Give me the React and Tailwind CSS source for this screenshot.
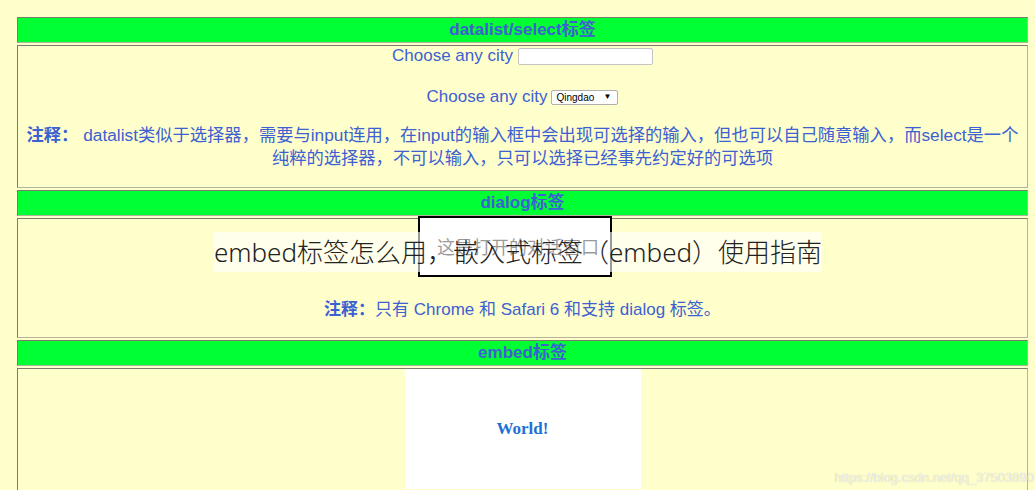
import React from 'react';

const cellBorder = 'border border-t-[#7c7c6c] border-l-[#7c7c6c] border-b-[#b4b49c] border-r-[#b4b49c]';

function HeaderCell({ children }) {
    return (
        <div className={`${cellBorder} h-[26px] bg-[#00ff33] flex items-center justify-center font-bold`}>
            {children}
        </div>
    );
}

export default function App() {
    return (
        <div className="relative h-[490px] overflow-hidden bg-[#ffffcc] text-[17px] text-[#3d60d2] font-['Liberation_Sans','Noto_Sans_CJK_SC',sans-serif]">
            {/* table */}
            <div className="pt-[17px] pl-[17px] pr-[7px] flex flex-col gap-[2px]">
                <HeaderCell>datalist/select标签</HeaderCell>
                <div className={`${cellBorder} h-[143px]`}>
                    <div className="h-[20px] flex items-center justify-center whitespace-nowrap">
                        <span>Choose any city</span>
                        <span className="ml-[5px] w-[135px] h-[17px] border border-[#c4c4c4] bg-white rounded-[2px]" />
                    </div>
                    <div className="mt-[21px] h-[20px] flex items-center justify-center whitespace-nowrap">
                        <span>Choose any city</span>
                        <span className="ml-[4px] w-[67px] h-[15px] border border-[#b0b0b0] bg-white rounded-[2px] flex items-center justify-between pl-[4px] pr-[6px] text-[10px] text-black">
                            <span>Qingdao</span>
                            <span className="text-[8px]">▼</span>
                        </span>
                    </div>
                    <div className="mt-[17px] leading-[23px] text-center whitespace-nowrap text-[17.3px]">
                        <span className="font-bold">注释：</span> datalist类似于选择器，需要与input连用，在input的输入框中会出现可选择的输入，但也可以自己随意输入，而select是一个
                        <br />
                        纯粹的选择器，不可以输入，只可以选择已经事先约定好的可选项
                    </div>
                </div>

                <HeaderCell>dialog标签</HeaderCell>
                <div className={`${cellBorder} h-[120px] pt-[79px]`}>
                    <div className="leading-[23px] text-center whitespace-nowrap">
                        <span className="font-bold">注释：</span>只有 Chrome 和 Safari 6 和支持 dialog 标签。
                    </div>
                </div>

                <HeaderCell>embed标签</HeaderCell>
                <div className={`${cellBorder} h-[160px]`}>
                    <div className="mx-auto w-[236px] h-[120px] bg-white flex items-center justify-center">
                        <span className="font-['Liberation_Serif',serif] font-bold text-[17px] text-[#1f6fd6]">World!</span>
                    </div>
                </div>
            </div>

            {/* open dialog */}
            <div className="absolute left-[418px] top-[216px] w-[194px] h-[61px] border-2 border-black bg-white pt-[16px] pl-[17px]">
                <div className="text-[18px] leading-[24px] text-black font-['Noto_Sans_CJK_SC',sans-serif] whitespace-nowrap">这是打开的对话窗口</div>
            </div>

            {/* title banner */}
            <div className="absolute left-[214px] top-[232px] w-[608px] h-[40px] bg-white/60 flex items-center justify-center">
                <span className="whitespace-nowrap text-[26px] font-light text-[#222] font-['Noto_Sans','Noto_Sans_CJK_SC',sans-serif]">
                    embed标签怎么用，嵌入式标签（embed）使用指南
                </span>
            </div>

            {/* watermark */}
            <div className="absolute right-[1px] bottom-[3px] text-[13px] text-white/80 [text-shadow:0_0_1px_rgba(0,0,0,0.3)] font-['Liberation_Sans',sans-serif]">
                https://blog.csdn.net/qq_37503890
            </div>
        </div>
    );
}
